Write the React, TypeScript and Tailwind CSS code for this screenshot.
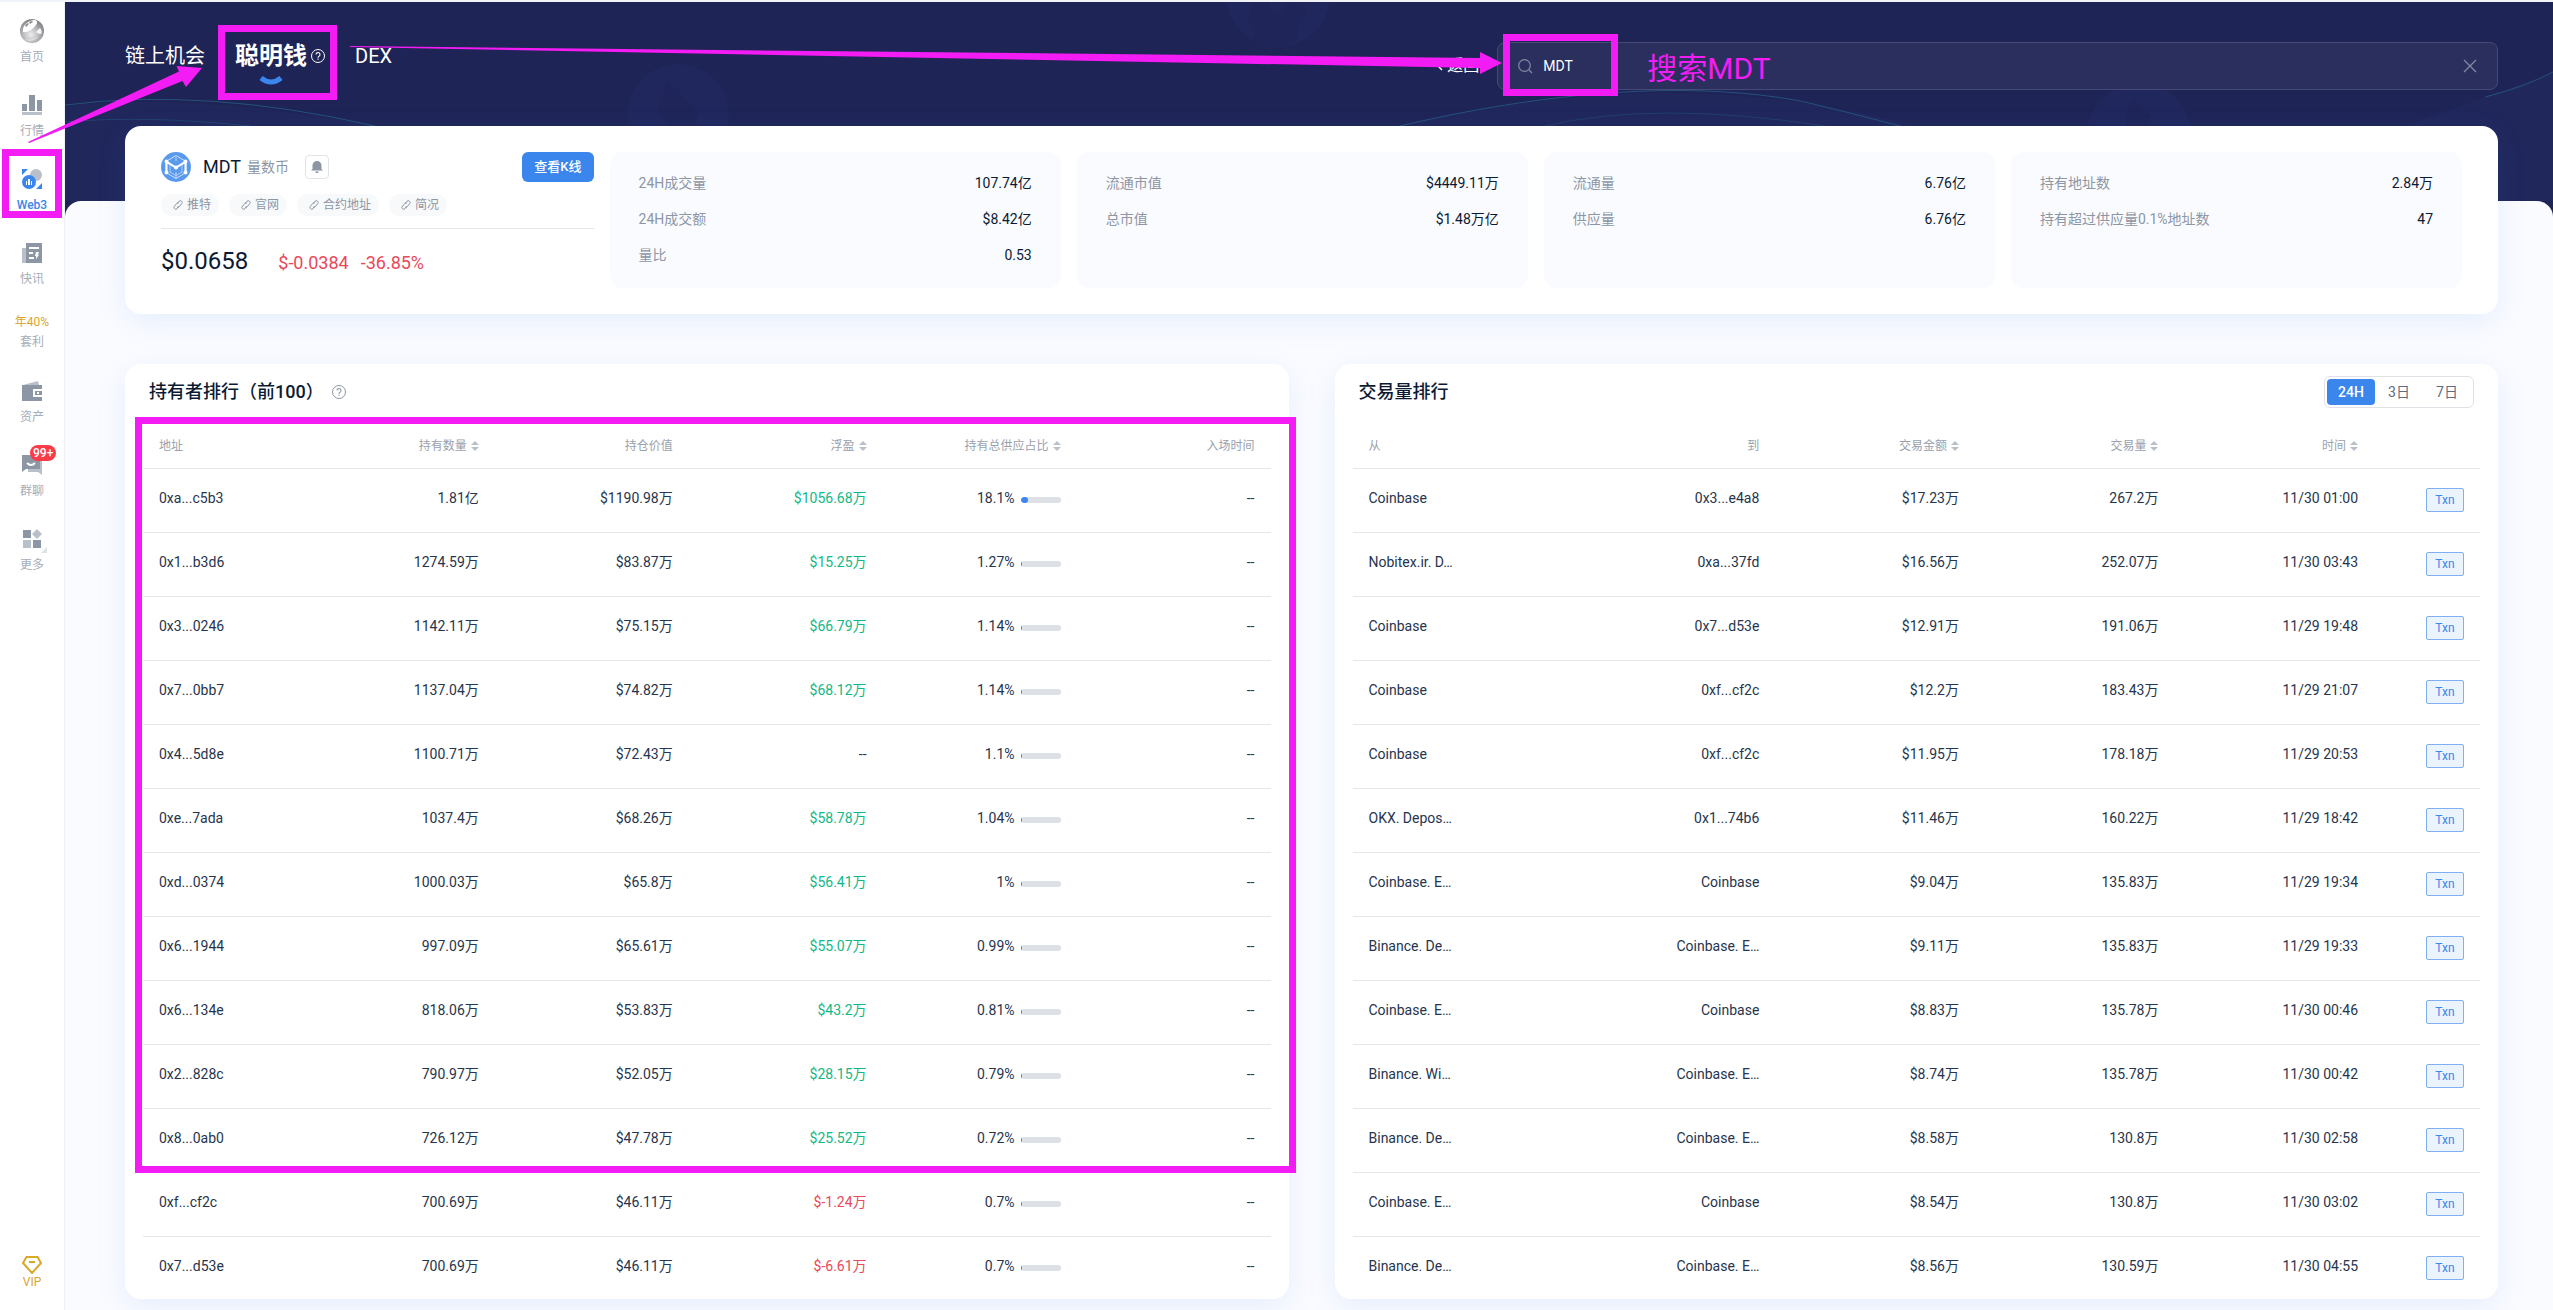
import type { ReactNode } from 'react'

const HOLDERS = [
  ['0xa...c5b3', '1.81亿', '$1190.98万', '$1056.68万', 18.1],
  ['0x1...b3d6', '1274.59万', '$83.87万', '$15.25万', 1.27],
  ['0x3...0246', '1142.11万', '$75.15万', '$66.79万', 1.14],
  ['0x7...0bb7', '1137.04万', '$74.82万', '$68.12万', 1.14],
  ['0x4...5d8e', '1100.71万', '$72.43万', '--', 1.1],
  ['0xe...7ada', '1037.4万', '$68.26万', '$58.78万', 1.04],
  ['0xd...0374', '1000.03万', '$65.8万', '$56.41万', 1],
  ['0x6...1944', '997.09万', '$65.61万', '$55.07万', 0.99],
  ['0x6...134e', '818.06万', '$53.83万', '$43.2万', 0.81],
  ['0x2...828c', '790.97万', '$52.05万', '$28.15万', 0.79],
  ['0x8...0ab0', '726.12万', '$47.78万', '$25.52万', 0.72],
  ['0xf...cf2c', '700.69万', '$46.11万', '$-1.24万', 0.7],
  ['0x7...d53e', '700.69万', '$46.11万', '$-6.61万', 0.7],
] as [string, string, string, string, number][]

const TRADES = [
  ['Coinbase', '0x3...e4a8', '$17.23万', '267.2万', '11/30 01:00'],
  ['Nobitex.ir. D…', '0xa...37fd', '$16.56万', '252.07万', '11/30 03:43'],
  ['Coinbase', '0x7...d53e', '$12.91万', '191.06万', '11/29 19:48'],
  ['Coinbase', '0xf...cf2c', '$12.2万', '183.43万', '11/29 21:07'],
  ['Coinbase', '0xf...cf2c', '$11.95万', '178.18万', '11/29 20:53'],
  ['OKX. Depos…', '0x1...74b6', '$11.46万', '160.22万', '11/29 18:42'],
  ['Coinbase. E…', 'Coinbase', '$9.04万', '135.83万', '11/29 19:34'],
  ['Binance. De…', 'Coinbase. E…', '$9.11万', '135.83万', '11/29 19:33'],
  ['Coinbase. E…', 'Coinbase', '$8.83万', '135.78万', '11/30 00:46'],
  ['Binance. Wi…', 'Coinbase. E…', '$8.74万', '135.78万', '11/30 00:42'],
  ['Binance. De…', 'Coinbase. E…', '$8.58万', '130.8万', '11/30 02:58'],
  ['Coinbase. E…', 'Coinbase', '$8.54万', '130.8万', '11/30 03:02'],
  ['Binance. De…', 'Coinbase. E…', '$8.56万', '130.59万', '11/30 04:55'],
]

const STATS = [
  [['24H成交量', '107.74亿'], ['24H成交额', '$8.42亿'], ['量比', '0.53']],
  [['流通市值', '$4449.11万'], ['总市值', '$1.48万亿']],
  [['流通量', '6.76亿'], ['供应量', '6.76亿']],
  [['持有地址数', '2.84万'], ['持有超过供应量0.1%地址数', '47']],
]

const LINKS = ['推特', '官网', '合约地址', '简况']

const CARD_SHADOW = 'shadow-[0_8px_30px_rgba(60,134,236,0.11)]'

const HomeIcon = () => (
  <svg className="size-6" viewBox="0 0 24 24">
    <defs>
      <radialGradient id="ball" cx="0.45" cy="0.65" r="0.6">
        <stop offset="0" stopColor="#eeeeef" />
        <stop offset="0.55" stopColor="#b9b9bd" />
        <stop offset="1" stopColor="#85858a" />
      </radialGradient>
    </defs>
    <circle cx="12" cy="12" r="12" fill="url(#ball)" />
    <path d="M3 13C2 7 7 2 14 1c3 0 4 2 2 5-3 4-8 8-13 7Z" fill="#fff" />
    <path d="m5 6 3-2 1 1-3 3Zm4-3 3-1 1 1-3 2Z" fill="#8e8e93" />
    <path d="M20 9c2 2 2 5 1 6-2 0-4-1-5-2Z" fill="#f4f4f5" />
    <path d="M5 20c4 1 9 0 13-3-3 5-9 7-13 3Z" fill="#dcdcdf" />
  </svg>
)

const MarketIcon = () => (
  <svg className="size-5" viewBox="0 0 20 20">
    <path d="M0 9h5v7H0zM7 0h6v16H7zM15 5h5v11h-5z" fill="#8c96a4" />
    <path d="M0 17h20v3H0z" fill="#b9c0ca" />
  </svg>
)

const Web3Icon = () => (
  <svg className="size-5" viewBox="0 0 20 20">
    <path d="M0 0h6L0 6zM20 14v6h-6z" fill="#3b86ec" />
    <circle cx="14" cy="6" r="6" fill="#b9c0ca" />
    <circle cx="7" cy="13" r="7" fill="#3b86ec" />
    <path d="M4 12h1v4H4zM6 10h2v6H6zM9 12h1v4H9z" fill="#fff" />
  </svg>
)

const NewsIcon = () => (
  <svg className="size-5" viewBox="0 0 20 20">
    <path d="M0 5h4v15H0z" fill="#b9c0ca" />
    <path d="M4 0h16v20H4z" fill="#8c96a4" />
    <path d="M7 4h10v2H7zM7 9h4v2H7zM7 14h5v2H7zM14 9h3l-1 3h1l-3 4v-3h-1z" fill="#fff" />
  </svg>
)

const WalletIcon = () => (
  <svg className="size-5" viewBox="0 0 20 20">
    <path d="m1 4 15-4 1 4Z" fill="#b9c0ca" />
    <path d="M0 4h20v4h-9v8h9v4H0Z" fill="#8c96a4" />
    <path d="M13 10h7v4h-7Zm2 1v2h2v-2Z" fill="#8c96a4" fillRule="evenodd" />
  </svg>
)

const ChatIcon = () => (
  <svg className="size-5" viewBox="0 0 20 20">
    <path d="M6 4h14v16l-4-3H6Z" fill="#b9c0ca" />
    <path d="M0 0h18v14H4l-4 3Z" fill="#8c96a4" />
    <path d="M5 8q4 4 8 0" fill="none" stroke="#fff" strokeWidth="2" />
  </svg>
)

const MoreIcon = () => (
  <svg className="size-5" viewBox="0 0 20 20">
    <path d="M1 1h8v8H1zM11 11h8v8h-8z" fill="#8c96a4" />
    <path d="M1 11h8v8H1zM15 0l5 5-5 5-5-5Z" fill="#b9c0ca" />
  </svg>
)

const HelpIcon = ({ className }: { className: string }) => (
  <svg className={className} viewBox="0 0 14 14" fill="none" stroke="currentColor">
    <circle cx="7" cy="7" r="6.5" />
    <path d="M5 5.6a2 2 0 1 1 2.8 1.8C7.2 7.7 7 8 7 8.7M7 9.6v1.2" strokeWidth="1.1" />
  </svg>
)

const LinkIcon = () => (
  <svg className="size-2.5" viewBox="0 0 10 10" fill="none" stroke="#8c96a4">
    <path d="M4 3.5 6 1.3a1.6 1.6 0 0 1 2.6 2.5L6 6.8a1.6 1.6 0 0 1-2 .2" />
    <path d="M6 6.5 4 8.7a1.6 1.6 0 0 1-2.6-2.5L4 3.200a1.6 1.6 0 0 1 2-.2" />
  </svg>
)

const SortIcon = () => (
  <svg className="h-2.5 w-2" viewBox="0 0 8 10">
    <path d="m4 0 4 4H0ZM4 10 0 6h8Z" fill="#b9c0ca" />
  </svg>
)

const TokenLogo = () => (
  <svg className="size-[30px]" viewBox="0 0 30 30" fill="none" stroke="#fff">
    <circle cx="15" cy="15" r="15" fill="#5a9aee" stroke="none" />
    <path d="M15 3.5 25 9.5v11l-10 6-10-6v-11Z" strokeOpacity="0.7" />
    <path d="M15 5v4M15 20v6M7 20l-2 1M25 21l-2-1" strokeOpacity="0.6" />
    <path d="M5.5 20V9.8L15 15.5l9.500-5.700V20" strokeWidth="2" />
    <path d="M9 12v8l6 3.5 6-3.500v-8" strokeOpacity="0.5" />
    <g fill="#fff" stroke="none">
      <circle cx="5.5" cy="9.5" r="2" />
      <circle cx="24.5" cy="9.5" r="2" />
      <circle cx="5.5" cy="20.5" r="2" />
      <circle cx="24.5" cy="20.5" r="2" />
      <circle cx="15" cy="15.5" r="2" />
    </g>
  </svg>
)

const NavItem = ({ label, children }: { label: string; children: ReactNode }) => (
  <li className="h-[74px] pt-3">
    <a href="#" className="flex flex-col items-center gap-2 text-[#a6adb8]">
      <span className="relative flex size-5 items-center justify-center">{children}</span>
      <span className="leading-4">{label}</span>
    </a>
  </li>
)

const Sidebar = () => (
  <nav className="flex w-[65px] shrink-0 flex-col border-r border-[#edf1f8] bg-white text-xs">
    <ul className="pt-[7px]">
      <NavItem label="首页">
        <span className="-m-1">
          <HomeIcon />
        </span>
      </NavItem>
      <NavItem label="行情">
        <MarketIcon />
      </NavItem>
      <li className="relative h-[74px] pt-3">
        <a href="#" className="flex flex-col items-center gap-2 font-medium text-[#3b86ec]">
          <Web3Icon />
          <span className="leading-4">Web3</span>
        </a>
        <div className="absolute inset-x-[2px] -top-2 h-[69px] border-[7px] border-[#f41cf4]"></div>
      </li>
      <NavItem label="快讯">
        <NewsIcon />
      </NavItem>
      <li className="h-16 pt-[7px]">
        <a href="#" className="flex flex-col items-center leading-5 text-[#a6adb8]">
          <span className="text-[#d9a52c]">年40%</span>
          <span>套利</span>
        </a>
      </li>
      <NavItem label="资产">
        <WalletIcon />
      </NavItem>
      <NavItem label="群聊">
        <ChatIcon />
        <span className="absolute -top-2.5 left-2 rounded-full bg-[#fb3b48] px-[3px] leading-4 font-medium text-white">99+</span>
      </NavItem>
      <NavItem label="更多">
        <MoreIcon />
        <svg className="absolute top-[18px] left-[19px] size-1.5" viewBox="0 0 6 6">
          <path d="M6 0v6H0Z" fill="#dfe2e8" />
        </svg>
      </NavItem>
    </ul>
    <a href="#" className="mt-auto mb-5 flex flex-col items-center text-[#d9a52c]">
      <svg className="h-[18px] w-5" viewBox="0 0 20 18" fill="none" stroke="#d9a927" strokeWidth="2">
        <path d="M4.5 1h11L19 7l-9 10L1 7ZM7 6h6" />
      </svg>
      <span className="leading-4">VIP</span>
    </a>
  </nav>
)

// Faint coins and light trails behind the top bar
const Backdrop = () => (
  <svg className="absolute inset-x-0 top-0 h-[199px] w-full" viewBox="0 0 2488 199" preserveAspectRatio="xMinYMin slice" fill="none">
    <path d="M0 104Q120 90 310 123L360 199H0Z" fill="#20275b" />
    <path d="M0 103Q140 85 310 124" stroke="#24517b" />
    <path d="M0 120Q80 113 185 124" stroke="#224070" />
    <path d="M1330 124Q1610 58 1850 124Z" fill="#20275b" />
    <path d="M1335 124C1500 85 1640 80 1740 100Q1790 112 1835 124" stroke="#24517b" />
    <path d="M1480 124Q1590 98 1760 124" stroke="#223c6d" />
    <path d="M2340 124 2488 70V199H2380Z" fill="#20275b" />
    <path d="M2420 95Q2460 85 2488 70" stroke="#24517b" />
    <g fill="#20275d">
      <circle cx="613" cy="113" r="51" />
      <circle cx="1213" cy="-7" r="52" />
      <circle cx="2074" cy="133" r="52" />
    </g>
    <g fill="#1f2558">
      <path d="m602 77 31 33-4 14h-25l-11-14Z" />
      <path d="M1190 0h14l2 8 10 4 8-12h12l5 12-8 12-2 14-14 6-20 2-9-8 2-12-8-8Z" />
      <path d="m2068 96 18 18-4 12h-20l-2-10Z" />
    </g>
  </svg>
)

const TopBar = () => (
  <header className="relative flex h-[199px] items-start justify-between pr-[55px] pl-[60px] text-white">
    <Backdrop />
    <div className="relative flex h-[108px] items-center gap-[30px] text-xl">
      <a href="#">链上机会</a>
      <a href="#" className="relative flex items-center gap-1">
        <span className="text-2xl font-bold">聪明钱</span>
        <HelpIcon className="size-3.5" />
        <svg className="absolute top-9 left-6 h-[9px] w-6" viewBox="0 0 24 9">
          <path d="M2 2q10 8 20 0" fill="none" stroke="#3b86ec" strokeWidth="5" />
        </svg>
        <div className="absolute -top-[15px] -right-3 -left-[17px] h-[75px] border-[7px] border-[#f41cf4]"></div>
      </a>
      <a href="#">DEX</a>
    </div>
    <div className="relative mt-10 flex items-center">
      <button className="mr-[18px] flex items-center gap-1 text-base">
        <svg className="h-2.5 w-1.5" viewBox="0 0 6 10" fill="none" stroke="#fff" strokeWidth="1.5">
          <path d="M5 1 1 5l4 4" />
        </svg>
        返回
      </button>
      <div className="relative flex h-12 w-[39.2vw] items-center rounded-lg border border-[#444a75] bg-[#2a2f5e] px-5">
        <svg className="size-[15px]" viewBox="0 0 15 15" fill="none" stroke="#858aa5" strokeWidth="1.2">
          <circle cx="6.5" cy="6.5" r="5.8" />
          <path d="m11 11 3 3" />
        </svg>
        <input aria-label="搜索" defaultValue="MDT" className="ml-2.5 w-0 flex-1 bg-transparent text-sm text-white outline-none" />
        <button aria-label="清除">
          <svg className="size-3.5" viewBox="0 0 14 14" stroke="#858aa5" strokeWidth="1.2">
            <path d="m1 1 12 12M13 1 1 13" />
          </svg>
        </button>
        <div className="absolute -top-[9px] left-[5px] h-[62px] w-[115px] border-[7px] border-[#f41cf4]"></div>
        <span className="absolute top-0 left-[149px] text-3xl leading-[52px] text-[#f41cf4]">搜索MDT</span>
      </div>
    </div>
  </header>
)

const TokenCard = () => (
  <section className={`relative -mt-[75px] flex gap-4 rounded-2xl bg-white px-9 pt-[26px] pb-[26px] ${CARD_SHADOW}`}>
    <div className="w-[18.8%] shrink-0">
      <div className="flex h-[30px] items-center">
        <TokenLogo />
        <h1 className="ml-3 text-lg text-[#0b1a33]">MDT</h1>
        <span className="ml-1.5 text-sm text-[#8c96a4]">量数币</span>
        <button aria-label="提醒" className="ml-4 flex size-6 items-center justify-center rounded border border-[#e0e3ea]">
          <svg className="size-3" viewBox="0 0 12 12" fill="#8c96a4">
            <path d="M6 0a4.5 4.5 0 0 1 4.5 4.5V8L12 9.5H0L1.5 8V4.5A4.5 4.5 0 0 1 6 0ZM4 10.5h4L7 12H5Z" />
          </svg>
        </button>
        <button className="ml-auto h-[30px] rounded-md bg-[#3b86ec] px-3 text-[13px] font-medium text-white">查看K线</button>
      </div>
      <div className="mt-3 flex gap-2.5">
        {LINKS.map((link) => (
          <a key={link} href="#" className="flex h-[22px] items-center gap-1 rounded-full bg-[#f8f9fb] pr-2 pl-3 text-xs text-[#8c96a4]">
            <LinkIcon />
            {link}
          </a>
        ))}
      </div>
      <div className="mt-3 flex items-baseline border-t border-[#e6e7e9] pt-4">
        <span className="text-2xl text-[#0b1a33]">$0.0658</span>
        <span className="ml-[30px] text-lg text-[#e9495a]">$-0.0384</span>
        <span className="ml-3 text-lg text-[#e9495a]">-36.85%</span>
      </div>
    </div>
    {STATS.map((group) => (
      <dl key={group[0][0]} className="h-[136px] flex-1 rounded-xl bg-[#fafbff] px-[29px] pt-[13px] text-sm">
        {group.map(([name, value]) => (
          <div key={name} className="flex h-9 items-center justify-between">
            <dt className="text-[#8c96a4]">{name}</dt>
            <dd className="text-[#0b1a33]">{value}</dd>
          </div>
        ))}
      </dl>
    ))}
  </section>
)

const Th = ({ label, sort, className = 'text-right' }: { label: string; sort?: boolean; className?: string }) => (
  <th className={`px-4 font-normal ${className}`}>
    {sort ? (
      <button className="inline-flex items-center gap-1">
        {label}
        <SortIcon />
      </button>
    ) : (
      label
    )}
  </th>
)

const profitColor = (profit: string) => {
  if (profit === '--') return 'text-[#26344d]'
  return profit.startsWith('$-') ? 'text-[#e9495a]' : 'text-[#12b886]'
}

const HolderTable = () => (
  <section className={`relative flex-1 rounded-2xl bg-white px-[18px] ${CARD_SHADOW}`}>
    <div className="mb-1 flex h-14 items-center gap-2 px-1.5">
      <h2 className="text-lg font-medium text-[#0b1a33]">持有者排行（前100）</h2>
      <HelpIcon className="size-3.5 text-[#8c96a4]" />
    </div>
    <table className="w-full table-fixed">
      <thead>
        <tr className="h-11 border-b border-[#e6e7e9] text-xs text-[#99a1ae]">
          <Th label="地址" className="w-[14%] text-left" />
          <Th label="持有数量" sort />
          <Th label="持仓价值" />
          <Th label="浮盈" sort />
          <Th label="持有总供应占比" sort />
          <Th label="入场时间" />
        </tr>
      </thead>
      <tbody className="text-sm text-[#26344d]">
        {HOLDERS.map(([address, amount, value, profit, share]) => (
          <tr key={address} className="h-16 border-b border-[#e6e7e9] last:h-[63px] last:border-0">
            <td className="px-4 pb-1">{address}</td>
            <td className="px-4 pb-1 text-right">{amount}</td>
            <td className="px-4 pb-1 text-right">{value}</td>
            <td className={`px-4 pb-1 text-right ${profitColor(profit)}`}>{profit}</td>
            <td className="px-4 pb-1">
              <div className="flex items-center justify-end gap-1.5">
                {share}%
                <div className="mt-1 h-1.5 w-10 overflow-hidden rounded-full bg-[#dde0e5]">
                  <div className="h-full rounded-full bg-[#3b86ec]" style={{ width: `${share}%`, minWidth: 1 }}></div>
                </div>
              </div>
            </td>
            <td className="px-4 pb-1 text-right">--</td>
          </tr>
        ))}
      </tbody>
    </table>
    <div className="absolute top-[53px] -right-[7px] left-[10px] h-[756px] border-[7px] border-[#f41cf4]"></div>
  </section>
)

const TradeTable = () => (
  <section className={`flex-1 rounded-2xl bg-white px-[18px] ${CARD_SHADOW}`}>
    <div className="mb-1 flex h-14 items-center justify-between px-1.5">
      <h2 className="text-lg font-medium text-[#0b1a33]">交易量排行</h2>
      <div className="flex h-8 w-[150px] rounded-md border border-[#dfe2e7] p-0.5 text-sm text-[#5f6b7e]">
        <button className="flex-1 rounded bg-[#3b86ec] font-medium text-white">24H</button>
        <button className="flex-1">3日</button>
        <button className="flex-1">7日</button>
      </div>
    </div>
    <table className="w-full table-fixed">
      <thead>
        <tr className="h-11 border-b border-[#e6e7e9] text-xs text-[#99a1ae]">
          <Th label="从" className="text-left" />
          <Th label="到" className="w-[17.7%] text-right" />
          <Th label="交易金额" sort className="w-[17.7%] text-right" />
          <Th label="交易量" sort className="w-[17.7%] text-right" />
          <Th label="时间" sort className="w-[17.7%] text-right" />
          <th className="w-[9.4%]"></th>
        </tr>
      </thead>
      <tbody className="text-sm text-[#26344d]">
        {TRADES.map(([from, to, total, volume, time]) => (
          <tr key={time} className="h-16 border-b border-[#e6e7e9] last:h-[63px] last:border-0">
            <td className="px-4 pb-1">{from}</td>
            <td className="px-4 pb-1 text-right">{to}</td>
            <td className="px-4 pb-1 text-right">{total}</td>
            <td className="px-4 pb-1 text-right">{volume}</td>
            <td className="px-4 pb-1 text-right">{time}</td>
            <td className="px-4">
              <a href="#" className="ml-auto flex h-6 w-[38px] items-center justify-center rounded-xs border border-[#7fb0f3] bg-[#ebf3fd] text-xs text-[#3b86ec]">
                Txn
              </a>
            </td>
          </tr>
        ))}
      </tbody>
    </table>
  </section>
)

const Arrows = () => (
  <svg className="pointer-events-none absolute top-0 left-0 h-[150px] w-[1510px]" viewBox="0 0 1510 150" fill="#f41cf4">
    <path d="M28 140 179 69.5 176.5 64l25.500 2-16 19-3.500-6L29 141Z" />
    <path d="M350 44 1480 56v-6l22 11-22 11v-6L350 45Z" />
  </svg>
)

export default function App() {
  return (
    <div className="relative flex min-h-screen overflow-hidden border-t-2 border-[#f0f3f8] bg-[#1f2456] font-[Roboto,'Noto_Sans_CJK_SC',sans-serif]">
      <Sidebar />
      <div className="flex min-w-0 flex-1 flex-col">
        <TopBar />
        <main className="relative flex-1 rounded-t-2xl bg-[#fafbff] pr-[55px] pb-2.5 pl-[60px]">
          <TokenCard />
          <div className="mt-[50px] flex gap-[46px]">
            <HolderTable />
            <TradeTable />
          </div>
        </main>
      </div>
      <Arrows />
    </div>
  )
}
